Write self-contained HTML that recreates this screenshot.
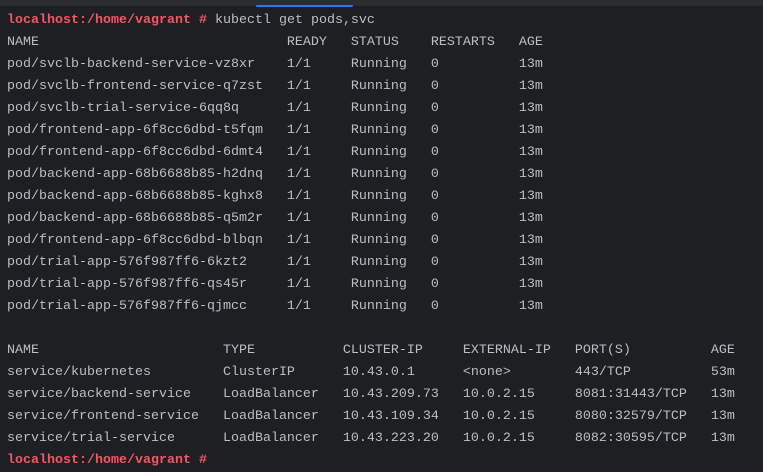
<!DOCTYPE html>
<html><head><style>
html,body{margin:0;padding:0;width:763px;height:454px;overflow:hidden;background:#1e1f22;}
.top{position:absolute;left:0;top:0;width:763px;height:6px;background:#2b2d30;}
.ul{position:absolute;left:256px;top:5px;width:97px;height:2px;background:#3574f0;border-radius:1px;}
pre{position:absolute;left:7px;top:10px;margin:0;font-family:"Liberation Mono",monospace;font-size:13.33px;line-height:22px;color:#bcbec4;}
.r{color:#f75464;font-weight:bold;}
</style></head><body>
<div class="top"></div><div class="ul"></div>
<pre><span class="r">localhost:/home/vagrant #</span> kubectl get pods,svc
NAME                               READY   STATUS    RESTARTS   AGE
pod/svclb-backend-service-vz8xr    1/1     Running   0          13m
pod/svclb-frontend-service-q7zst   1/1     Running   0          13m
pod/svclb-trial-service-6qq8q      1/1     Running   0          13m
pod/frontend-app-6f8cc6dbd-t5fqm   1/1     Running   0          13m
pod/frontend-app-6f8cc6dbd-6dmt4   1/1     Running   0          13m
pod/backend-app-68b6688b85-h2dnq   1/1     Running   0          13m
pod/backend-app-68b6688b85-kghx8   1/1     Running   0          13m
pod/backend-app-68b6688b85-q5m2r   1/1     Running   0          13m
pod/frontend-app-6f8cc6dbd-blbqn   1/1     Running   0          13m
pod/trial-app-576f987ff6-6kzt2     1/1     Running   0          13m
pod/trial-app-576f987ff6-qs45r     1/1     Running   0          13m
pod/trial-app-576f987ff6-qjmcc     1/1     Running   0          13m

NAME                       TYPE           CLUSTER-IP     EXTERNAL-IP   PORT(S)          AGE
service/kubernetes         ClusterIP      10.43.0.1      &lt;none&gt;        443/TCP          53m
service/backend-service    LoadBalancer   10.43.209.73   10.0.2.15     8081:31443/TCP   13m
service/frontend-service   LoadBalancer   10.43.109.34   10.0.2.15     8080:32579/TCP   13m
service/trial-service      LoadBalancer   10.43.223.20   10.0.2.15     8082:30595/TCP   13m
<span class="r">localhost:/home/vagrant #</span></pre>
</body></html>
